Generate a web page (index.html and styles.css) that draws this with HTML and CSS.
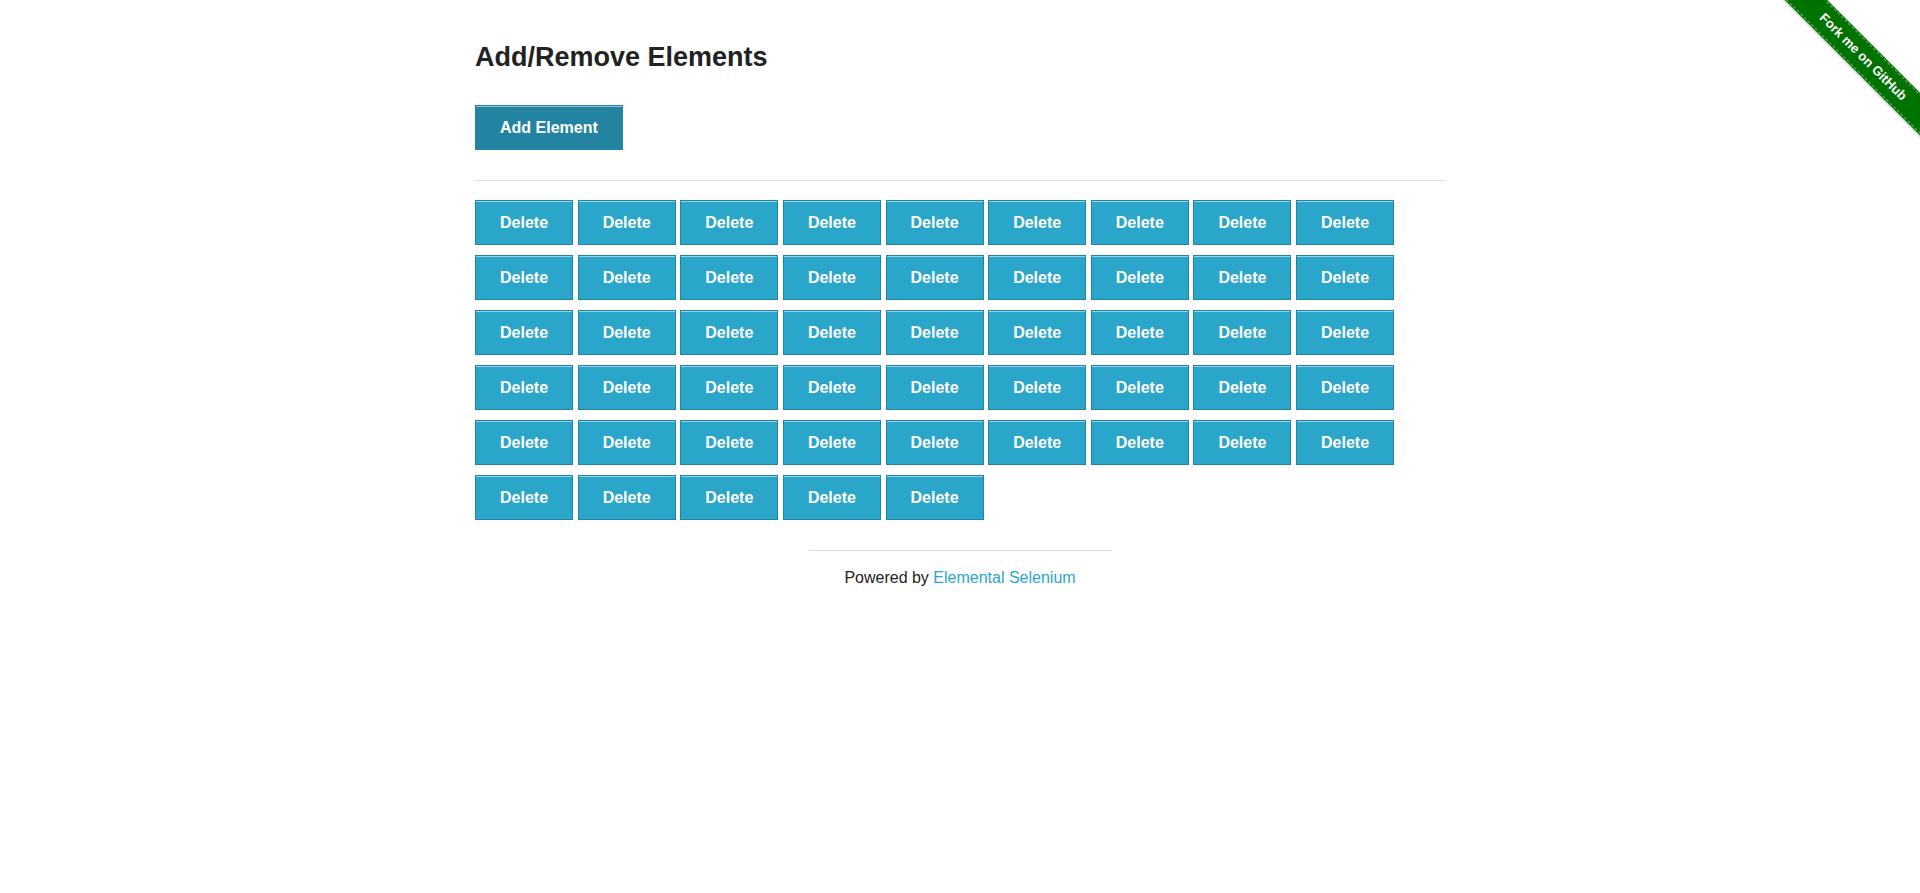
FILE: index.html
```
<!DOCTYPE html>
<html lang="en">
<head>
<meta charset="utf-8">
<title>The Internet</title>
<link rel="stylesheet" href="styles.css">
</head>
<body>
<a class="ribbon" href="#"><span class="ribbon-band">Fork me on GitHub</span></a>
<div class="page">
  <div class="example">
    <h3 class="title">Add/Remove Elements</h3>
    <button class="btn btn-add">Add Element</button>
    <hr class="rule">
    <div class="elements">
      <button class="btn">Delete</button><button class="btn">Delete</button><button class="btn">Delete</button><button class="btn">Delete</button><button class="btn">Delete</button><button class="btn">Delete</button><button class="btn">Delete</button><button class="btn">Delete</button><button class="btn">Delete</button>
      <button class="btn">Delete</button><button class="btn">Delete</button><button class="btn">Delete</button><button class="btn">Delete</button><button class="btn">Delete</button><button class="btn">Delete</button><button class="btn">Delete</button><button class="btn">Delete</button><button class="btn">Delete</button>
      <button class="btn">Delete</button><button class="btn">Delete</button><button class="btn">Delete</button><button class="btn">Delete</button><button class="btn">Delete</button><button class="btn">Delete</button><button class="btn">Delete</button><button class="btn">Delete</button><button class="btn">Delete</button>
      <button class="btn">Delete</button><button class="btn">Delete</button><button class="btn">Delete</button><button class="btn">Delete</button><button class="btn">Delete</button><button class="btn">Delete</button><button class="btn">Delete</button><button class="btn">Delete</button><button class="btn">Delete</button>
      <button class="btn">Delete</button><button class="btn">Delete</button><button class="btn">Delete</button><button class="btn">Delete</button><button class="btn">Delete</button><button class="btn">Delete</button><button class="btn">Delete</button><button class="btn">Delete</button><button class="btn">Delete</button>
      <button class="btn">Delete</button><button class="btn">Delete</button><button class="btn">Delete</button><button class="btn">Delete</button><button class="btn">Delete</button>
    </div>
  </div>
  <div class="footer">
    <hr class="rule footer-rule">
    <div class="footer-text">Powered by <a class="footer-link" href="#">Elemental Selenium</a></div>
  </div>
</div>
</body>
</html>
```
FILE: styles.css
```
html, body {
  margin: 0;
  padding: 0;
  background: #fff;
}
body {
  font-family: "Liberation Sans", Arial, Helvetica, sans-serif;
  color: #222;
  font-size: 16px;
  overflow: hidden;
}
.page {
  width: 1000px;
  margin: 0 auto;
  padding: 41px 15px 0;
  box-sizing: border-box;
}
.title {
  margin: 0 0 32px;
  font-size: 27px;
  line-height: 32px;
  font-weight: bold;
  color: #222;
}
.btn {
  display: block;
  box-sizing: border-box;
  height: 45px;
  margin: 0;
  padding: 13px 24px 12px;
  font-family: "Liberation Sans", Arial, Helvetica, sans-serif;
  font-size: 16px;
  line-height: 18px;
  font-weight: bold;
  color: #fff;
  background: #2ba6cb;
  border: 1px solid #2284a1;
  box-shadow: inset 0 1px 0 rgba(255, 255, 255, 0.5);
  border-radius: 0;
  cursor: pointer;
}
.btn-add {
  background: #2284a1;
  border-color: #2284a1;
}
.rule {
  border: 0;
  border-top: 1px solid #ddd;
  height: 0;
  margin: 30px 0 19px;
}
.elements {
  display: flex;
  flex-wrap: wrap;
  column-gap: 4.6px;
  row-gap: 10px;
}
.footer {
  width: 303px;
  margin: 0 auto;
}
.footer-rule {
  margin: 30px 0 15px;
}
.footer-text {
  text-align: center;
  line-height: 24px;
  font-size: 16px;
}
.footer-link {
  color: #2ba6cb;
  text-decoration: none;
}
.ribbon {
  position: absolute;
  top: 0;
  right: 0;
  width: 149px;
  height: 149px;
  overflow: hidden;
  text-decoration: none;
}
.ribbon-band {
  position: absolute;
  left: -8px;
  top: 42px;
  width: 200px;
  height: 30px;
  line-height: 30px;
  transform: rotate(45deg);
  background: #007200;
  color: #fff;
  font-family: "Liberation Sans", Arial, sans-serif;
  font-size: 13px;
  font-weight: bold;
  text-align: center;
  box-shadow: 0 1px 2px rgba(0, 0, 0, 0.25);
}
.ribbon-band::before {
  content: "";
  position: absolute;
  left: 0;
  right: 0;
  top: 1px;
  bottom: 1px;
  border-top: 1px dashed rgba(255, 255, 255, 0.45);
  border-bottom: 1px dashed rgba(255, 255, 255, 0.45);
}
```
